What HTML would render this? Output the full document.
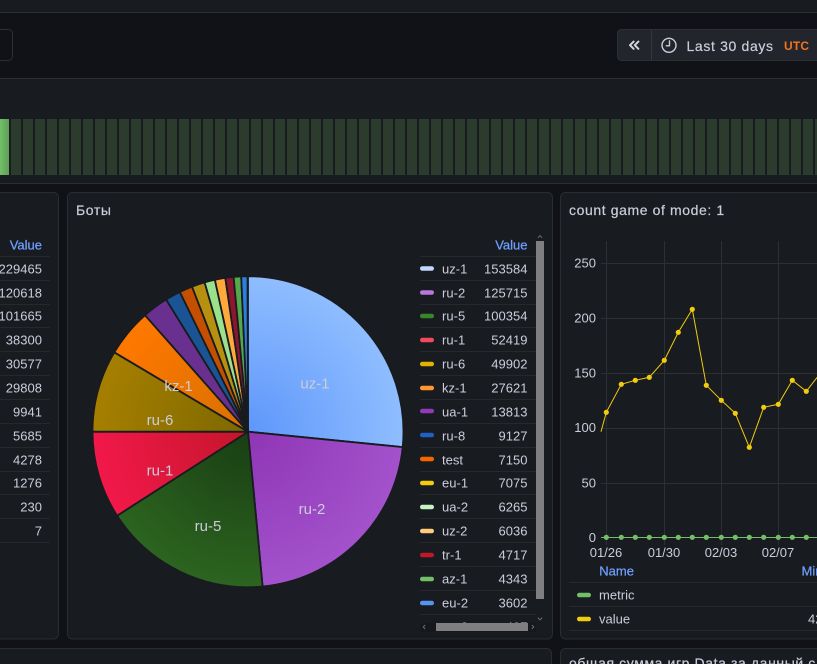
<!DOCTYPE html>
<html><head><meta charset="utf-8">
<style>
html,body{margin:0;padding:0;background:#111217;width:817px;height:664px;overflow:hidden}
svg{display:block;font-family:"Liberation Sans","Noto Sans CJK SC",sans-serif}
text{fill:#ccccdc;font-size:13px}
.e{text-anchor:end}
.m{text-anchor:middle}
.b{fill:#6e9fff;stroke:#6e9fff;stroke-width:.25px}
.t{font-size:14px;fill:#ccccdc;stroke:#ccccdc;stroke-width:.2px;letter-spacing:.6px}
.n{letter-spacing:.02px}
.p{font-size:15px;text-anchor:middle;fill:#ccccdc}
.l{stroke:#26282d;stroke-width:1}
.g{stroke:#2c2f34;stroke-width:1}
</style></head><body>
<svg width="817" height="664" viewBox="0 0 817 664" xmlns="http://www.w3.org/2000/svg">
<defs>
<linearGradient id="first" x1="0" x2="1" y1="0" y2="0"><stop offset="0" stop-color="#73bf69"/><stop offset="1" stop-color="#5da055"/></linearGradient>
<radialGradient id="a1" gradientUnits="userSpaceOnUse" cx="0" cy="0" r="156"><stop offset="0" stop-color="#5e97fb"/><stop offset="1" stop-color="#8fbdff"/></radialGradient>
<radialGradient id="a2" gradientUnits="userSpaceOnUse" cx="0" cy="0" r="156"><stop offset="0" stop-color="#8f35b5"/><stop offset="1" stop-color="#a352cc"/></radialGradient>
<radialGradient id="a3" gradientUnits="userSpaceOnUse" cx="0" cy="0" r="156"><stop offset="0" stop-color="#193e13"/><stop offset="1" stop-color="#2c6420"/></radialGradient>
<radialGradient id="a4" gradientUnits="userSpaceOnUse" cx="0" cy="0" r="156"><stop offset="0" stop-color="#c4162a"/><stop offset="1" stop-color="#f2184a"/></radialGradient>
<radialGradient id="a5" gradientUnits="userSpaceOnUse" cx="0" cy="0" r="156"><stop offset="0" stop-color="#7d6800"/><stop offset="1" stop-color="#a67f00"/></radialGradient>
<radialGradient id="a6" gradientUnits="userSpaceOnUse" cx="0" cy="0" r="156"><stop offset="0" stop-color="#d87000"/><stop offset="1" stop-color="#ff7800"/></radialGradient>
<clipPath id="cp3"><rect x="420" y="605" width="116" height="18"/></clipPath>
</defs>

<rect width="817" height="664" fill="#111217"/>
<!-- top strip -->
<rect x="0" y="0" width="817" height="12" fill="#181b1f"/>
<rect x="0" y="12" width="817" height="1" fill="#2c2e33"/>

<!-- toolbar -->
<rect x="-20" y="29.5" width="32.5" height="31" rx="4" fill="#111217" stroke="#2c2f34"/>
<rect x="617.5" y="29.5" width="230" height="31" rx="4" fill="#22252b" stroke="#2c2f34"/>
<rect x="651" y="30" width="1" height="30" fill="#34373d"/>
<path d="M633.6 41.6l-3.6 3.6 3.6 3.6M638.4 41.6l-3.6 3.6 3.6 3.6" fill="none" stroke="#d5d5e2" stroke-width="2" stroke-linecap="round" stroke-linejoin="round"/>
<circle cx="669" cy="45.3" r="7" fill="none" stroke="#ccccdc" stroke-width="1.4"/>
<path d="M669.5 41v4.8h-3.2" fill="none" stroke="#ccccdc" stroke-width="1.4" stroke-linecap="round" stroke-linejoin="round"/>
<text x="686.5" y="51" style="font-size:14px;letter-spacing:.65px;stroke:#ccccdc;stroke-width:.2px">Last 30 days</text>
<text x="784" y="50" style="font-size:12px;fill:#f0741d;font-weight:bold;letter-spacing:.2px">UTC</text>

<!-- timeline panel -->
<rect x="0" y="78" width="817" height="1" fill="#2c2e33"/>
<rect x="0" y="79" width="817" height="104" fill="#181b1f"/>
<rect x="0" y="183" width="817" height="1" fill="#2c2e33"/>
<rect x="0" y="119" width="9" height="56" fill="url(#first)"/>
<path d="M11 147H817" stroke="#2b3c2e" stroke-width="56" stroke-dasharray="10 2" fill="none"/>

<!-- panels -->
<rect x="-20" y="192.5" width="78.5" height="446.5" rx="5" fill="#181b1f" stroke="#2a2c31"/>
<rect x="67.5" y="192.5" width="485" height="446.5" rx="5" fill="#181b1f" stroke="#2a2c31"/>
<rect x="560.5" y="192.5" width="290" height="446.5" rx="5" fill="#181b1f" stroke="#2a2c31"/>
<rect x="-20" y="648.5" width="571.5" height="40" rx="5" fill="#181b1f" stroke="#2a2c31"/>
<rect x="560.5" y="648.5" width="290" height="40" rx="5" fill="#181b1f" stroke="#2a2c31"/>
<text x="569" y="668" class="t">общая сумма игр Data за данный с</text>

<!-- left table -->
<text x="42" y="249.5" class="e b">Value</text>
<path class="l" d="M0 256.5H50M0 280.5H50M0 304.5H50M0 327.5H50M0 351.5H50M0 375.5H50M0 399.5H50M0 423.5H50M0 447.5H50M0 471.5H50M0 494.5H50M0 518.5H50M0 542.5H50"/>
<g>
<text class="e n" x="42" y="273.5">229465</text>
<text class="e n" x="42" y="297.5">120618</text>
<text class="e n" x="42" y="320.5">101665</text>
<text class="e n" x="42" y="344.5">38300</text>
<text class="e n" x="42" y="368.5">30577</text>
<text class="e n" x="42" y="392.5">29808</text>
<text class="e n" x="42" y="416.5">9941</text>
<text class="e n" x="42" y="440.5">5685</text>
<text class="e n" x="42" y="464.5">4278</text>
<text class="e n" x="42" y="487.5">1276</text>
<text class="e n" x="42" y="511.5">230</text>
<text class="e n" x="42" y="535.5">7</text>
</g>

<!-- bots panel -->
<text x="76" y="215" class="t">Боты</text>
<g transform="translate(248 431.7)" stroke="#181b1f" stroke-width="1.8" stroke-linejoin="round">
<path d="M0 0L0 -155.5A155.5 155.5 0 0 1 154.7 15.4Z" fill="url(#a1)"/>
<path d="M0 0L154.7 15.4A155.5 155.5 0 0 1 14.6 154.8Z" fill="url(#a2)"/>
<path d="M0 0L14.6 154.8A155.5 155.5 0 0 1 -130.9 84Z" fill="url(#a3)"/>
<path d="M0 0L-130.9 84A155.5 155.5 0 0 1 -155.5 0Z" fill="url(#a4)"/>
<path d="M0 0L-155.5 0A155.5 155.5 0 0 1 -133.7 -79.4Z" fill="url(#a5)"/>
<path d="M0 0L-133.7 -79.4A155.5 155.5 0 0 1 -103 -116.5Z" fill="url(#a6)"/>
<path d="M0 0L-103 -116.5A155.5 155.5 0 0 1 -81.9 -132.2Z" fill="#69308f"/>
<path d="M0 0L-81.9 -132.2A155.5 155.5 0 0 1 -68.2 -139.8Z" fill="#1a5494"/>
<path d="M0 0L-68.2 -139.8A155.5 155.5 0 0 1 -56 -145.1Z" fill="#c44f00"/>
<path d="M0 0L-56 -145.1A155.5 155.5 0 0 1 -43.4 -149.3Z" fill="#b8900f"/>
<path d="M0 0L-43.4 -149.3A155.5 155.5 0 0 1 -33.1 -151.9Z" fill="#9be08b"/>
<path d="M0 0L-33.1 -151.9A155.5 155.5 0 0 1 -22.7 -153.8Z" fill="#ffa93c"/>
<path d="M0 0L-22.7 -153.8A155.5 155.5 0 0 1 -14.4 -154.8Z" fill="#8e1530"/>
<path d="M0 0L-14.4 -154.8A155.5 155.5 0 0 1 -6.8 -155.3Z" fill="#56a64b"/>
<path d="M0 0L-6.8 -155.3A155.5 155.5 0 0 1 -.5 -155.5Z" fill="#2a7fe0"/>
</g>
<text class="p" x="315" y="388.5">uz-1</text>
<text class="p" x="312" y="514">ru-2</text>
<text class="p" x="208" y="531">ru-5</text>
<text class="p" x="160" y="475.5">ru-1</text>
<text class="p" x="160" y="425">ru-6</text>
<text class="p" x="178.5" y="391">kz-1</text>

<!-- bots legend -->
<text x="527.5" y="249.5" class="e b">Value</text>
<path class="l" d="M420 256.5H536M420 280.5H536M420 304.5H536M420 327.5H536M420 351.5H536M420 375.5H536M420 399.5H536M420 423.5H536M420 447.5H536M420 471.5H536M420 494.5H536M420 518.5H536M420 542.5H536M420 566.5H536M420 590.5H536M420 614.5H536"/>
<g>
<rect x="420" y="266.2" width="14" height="4.6" rx="2.3" fill="#c0d8ff"/>
<rect x="420" y="290.2" width="14" height="4.6" rx="2.3" fill="#b877d9"/>
<rect x="420" y="313.7" width="14" height="4.6" rx="2.3" fill="#37872d"/>
<rect x="420" y="337.7" width="14" height="4.6" rx="2.3" fill="#f2495c"/>
<rect x="420" y="361.7" width="14" height="4.6" rx="2.3" fill="#e0b400"/>
<rect x="420" y="385.7" width="14" height="4.6" rx="2.3" fill="#ff9830"/>
<rect x="420" y="408.7" width="14" height="4.6" rx="2.3" fill="#8f3bb8"/>
<rect x="420" y="432.7" width="14" height="4.6" rx="2.3" fill="#1f60c4"/>
<rect x="420" y="456.7" width="14" height="4.6" rx="2.3" fill="#fa6400"/>
<rect x="420" y="480.7" width="14" height="4.6" rx="2.3" fill="#f2cc0c"/>
<rect x="420" y="504.7" width="14" height="4.6" rx="2.3" fill="#c8f2c2"/>
<rect x="420" y="528.7" width="14" height="4.6" rx="2.3" fill="#ffcb7d"/>
<rect x="420" y="552.7" width="14" height="4.6" rx="2.3" fill="#c4162a"/>
<rect x="420" y="576.7" width="14" height="4.6" rx="2.3" fill="#73bf69"/>
<rect x="420" y="600.7" width="14" height="4.6" rx="2.3" fill="#5794f2"/>
</g>
<g>
<text x="442" y="273.5" class="n">uz-1</text><text class="e n" x="527.5" y="273.5">153584</text>
<text x="442" y="297.5" class="n">ru-2</text><text class="e n" x="527.5" y="297.5">125715</text>
<text x="442" y="320.5" class="n">ru-5</text><text class="e n" x="527.5" y="320.5">100354</text>
<text x="442" y="344.5" class="n">ru-1</text><text class="e n" x="527.5" y="344.5">52419</text>
<text x="442" y="368.5" class="n">ru-6</text><text class="e n" x="527.5" y="368.5">49902</text>
<text x="442" y="392.5" class="n">kz-1</text><text class="e n" x="527.5" y="392.5">27621</text>
<text x="442" y="416.5" class="n">ua-1</text><text class="e n" x="527.5" y="416.5">13813</text>
<text x="442" y="440.5" class="n">ru-8</text><text class="e n" x="527.5" y="440.5">9127</text>
<text x="442" y="464.5" class="n">test</text><text class="e n" x="527.5" y="464.5">7150</text>
<text x="442" y="487.5" class="n">eu-1</text><text class="e n" x="527.5" y="487.5">7075</text>
<text x="442" y="511.5" class="n">ua-2</text><text class="e n" x="527.5" y="511.5">6265</text>
<text x="442" y="535.5" class="n">uz-2</text><text class="e n" x="527.5" y="535.5">6036</text>
<text x="442" y="559.5" class="n">tr-1</text><text class="e n" x="527.5" y="559.5">4717</text>
<text x="442" y="583.5" class="n">az-1</text><text class="e n" x="527.5" y="583.5">4343</text>
<text x="442" y="607.5" class="n">eu-2</text><text class="e n" x="527.5" y="607.5">3602</text>
<g clip-path="url(#cp3)"><text x="442" y="631.5" class="n">eu-3</text><text class="e n" x="527.5" y="631.5">497</text></g>
</g>
<rect x="420" y="623" width="116" height="9" fill="#16181c"/>
<rect x="536" y="241" width="8" height="358" fill="#7f7f81"/>
<rect x="436" y="623" width="92" height="8" fill="#7f7f81"/>
<path d="M537.8 237.8l2.2-2.2 2.2 2.2M537.8 617.6l2.2 2.2 2.2-2.2" fill="none" stroke="#6a6b70" stroke-width="1"/>
<path d="M425.2 625l-2 2 2 2M531.8 625l2 2-2 2" fill="none" stroke="#6a6b70" stroke-width="1"/>

<!-- chart panel -->
<text x="569" y="215" class="t">count game of mode: 1</text>
<path class="g" d="M601 263.5H817M601 318.5H817M601 373.5H817M601 428.5H817M601 483.5H817M601 537.5H817"/>
<path class="g" d="M606.5 241V545M664.5 241V545M721.5 241V545M778.5 241V545"/>
<g>
<text class="e" x="596" y="267.5">250</text>
<text class="e" x="596" y="322.5">200</text>
<text class="e" x="596" y="377.5">150</text>
<text class="e" x="596" y="432">100</text>
<text class="e" x="596" y="487.5">50</text>
<text class="e" x="596" y="542">0</text>
</g>
<text class="m" x="606" y="557">01/26</text>
<text class="m" x="664" y="557">01/30</text>
<text class="m" x="721" y="557">02/03</text>
<text class="m" x="778" y="557">02/07</text>
<polyline fill="none" stroke="#f2cc0c" stroke-width="1" points="601,431.7 606.3,412.3 621.3,384.3 635.3,380.3 649.3,377.3 664.3,360.3 678.3,332.3 692.3,309.3 706.3,385.3 721.3,400.3 735.3,413.3 749.3,447.3 763.7,407.3 778.3,404.3 792.3,380.3 806.3,391.3 820.5,373"/>
<g fill="#f2cc0c">
<circle cx="606.3" cy="412.3" r="2.6"/><circle cx="621.3" cy="384.3" r="2.6"/><circle cx="635.3" cy="380.3" r="2.6"/><circle cx="649.3" cy="377.3" r="2.6"/><circle cx="664.3" cy="360.3" r="2.6"/><circle cx="678.3" cy="332.3" r="2.6"/><circle cx="692.3" cy="309.3" r="2.6"/><circle cx="706.3" cy="385.3" r="2.6"/><circle cx="721.3" cy="400.3" r="2.6"/><circle cx="735.3" cy="413.3" r="2.6"/><circle cx="749.3" cy="447.3" r="2.6"/><circle cx="763.7" cy="407.3" r="2.6"/><circle cx="778.3" cy="404.3" r="2.6"/><circle cx="792.3" cy="380.3" r="2.6"/><circle cx="806.3" cy="391.3" r="2.6"/>
</g>
<path d="M601 537.5H817" stroke="#73bf69" stroke-width="1"/>
<g fill="#73bf69">
<circle cx="606.3" cy="537.3" r="2.6"/><circle cx="621.3" cy="537.3" r="2.6"/><circle cx="635.3" cy="537.3" r="2.6"/><circle cx="649.3" cy="537.3" r="2.6"/><circle cx="664.3" cy="537.3" r="2.6"/><circle cx="678.3" cy="537.3" r="2.6"/><circle cx="692.3" cy="537.3" r="2.6"/><circle cx="706.3" cy="537.3" r="2.6"/><circle cx="721.3" cy="537.3" r="2.6"/><circle cx="735.3" cy="537.3" r="2.6"/><circle cx="749.3" cy="537.3" r="2.6"/><circle cx="763.7" cy="537.3" r="2.6"/><circle cx="778.3" cy="537.3" r="2.6"/><circle cx="792.3" cy="537.3" r="2.6"/><circle cx="806.3" cy="537.3" r="2.6"/>
</g>
<text x="599.3" y="575.5" class="b">Name</text>
<text x="801.5" y="575.5" class="b">Min</text>
<path class="l" d="M569 582.5H817M569 606.5H817M569 630.5H817"/>
<rect x="577" y="592.7" width="14" height="4.6" rx="2.3" fill="#73bf69"/>
<rect x="577" y="616.7" width="14" height="4.6" rx="2.3" fill="#f2cc0c"/>
<text x="599" y="599.5" class="n">metric</text>
<text x="599" y="623.5" class="n">value</text>
<text x="808" y="623.5" class="n">42</text>
</svg>
</body></html>
